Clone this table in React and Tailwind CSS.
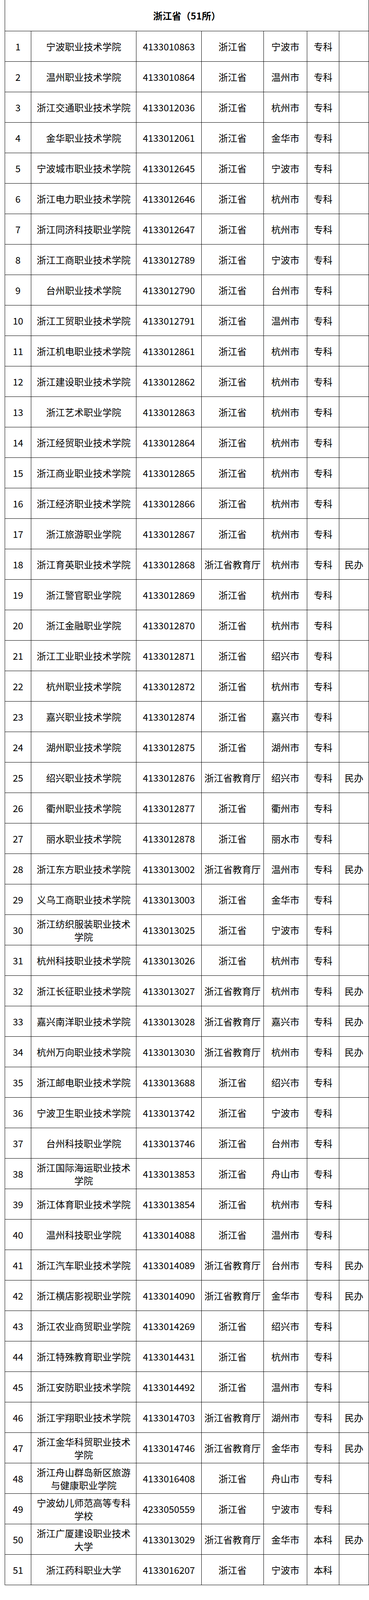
const ROWS = [
  ['1', '宁波职业技术学院', '4133010863', '浙江省', '宁波市', '专科', ''],
  ['2', '温州职业技术学院', '4133010864', '浙江省', '温州市', '专科', ''],
  ['3', '浙江交通职业技术学院', '4133012036', '浙江省', '杭州市', '专科', ''],
  ['4', '金华职业技术学院', '4133012061', '浙江省', '金华市', '专科', ''],
  ['5', '宁波城市职业技术学院', '4133012645', '浙江省', '宁波市', '专科', ''],
  ['6', '浙江电力职业技术学院', '4133012646', '浙江省', '杭州市', '专科', ''],
  ['7', '浙江同济科技职业学院', '4133012647', '浙江省', '杭州市', '专科', ''],
  ['8', '浙江工商职业技术学院', '4133012789', '浙江省', '宁波市', '专科', ''],
  ['9', '台州职业技术学院', '4133012790', '浙江省', '台州市', '专科', ''],
  ['10', '浙江工贸职业技术学院', '4133012791', '浙江省', '温州市', '专科', ''],
  ['11', '浙江机电职业技术学院', '4133012861', '浙江省', '杭州市', '专科', ''],
  ['12', '浙江建设职业技术学院', '4133012862', '浙江省', '杭州市', '专科', ''],
  ['13', '浙江艺术职业学院', '4133012863', '浙江省', '杭州市', '专科', ''],
  ['14', '浙江经贸职业技术学院', '4133012864', '浙江省', '杭州市', '专科', ''],
  ['15', '浙江商业职业技术学院', '4133012865', '浙江省', '杭州市', '专科', ''],
  ['16', '浙江经济职业技术学院', '4133012866', '浙江省', '杭州市', '专科', ''],
  ['17', '浙江旅游职业学院', '4133012867', '浙江省', '杭州市', '专科', ''],
  ['18', '浙江育英职业技术学院', '4133012868', '浙江省教育厅', '杭州市', '专科', '民办'],
  ['19', '浙江警官职业学院', '4133012869', '浙江省', '杭州市', '专科', ''],
  ['20', '浙江金融职业学院', '4133012870', '浙江省', '杭州市', '专科', ''],
  ['21', '浙江工业职业技术学院', '4133012871', '浙江省', '绍兴市', '专科', ''],
  ['22', '杭州职业技术学院', '4133012872', '浙江省', '杭州市', '专科', ''],
  ['23', '嘉兴职业技术学院', '4133012874', '浙江省', '嘉兴市', '专科', ''],
  ['24', '湖州职业技术学院', '4133012875', '浙江省', '湖州市', '专科', ''],
  ['25', '绍兴职业技术学院', '4133012876', '浙江省教育厅', '绍兴市', '专科', '民办'],
  ['26', '衢州职业技术学院', '4133012877', '浙江省', '衢州市', '专科', ''],
  ['27', '丽水职业技术学院', '4133012878', '浙江省', '丽水市', '专科', ''],
  ['28', '浙江东方职业技术学院', '4133013002', '浙江省教育厅', '温州市', '专科', '民办'],
  ['29', '义乌工商职业技术学院', '4133013003', '浙江省', '金华市', '专科', ''],
  ['30', '浙江纺织服装职业技术学院', '4133013025', '浙江省', '宁波市', '专科', ''],
  ['31', '杭州科技职业技术学院', '4133013026', '浙江省', '杭州市', '专科', ''],
  ['32', '浙江长征职业技术学院', '4133013027', '浙江省教育厅', '杭州市', '专科', '民办'],
  ['33', '嘉兴南洋职业技术学院', '4133013028', '浙江省教育厅', '嘉兴市', '专科', '民办'],
  ['34', '杭州万向职业技术学院', '4133013030', '浙江省教育厅', '杭州市', '专科', '民办'],
  ['35', '浙江邮电职业技术学院', '4133013688', '浙江省', '绍兴市', '专科', ''],
  ['36', '宁波卫生职业技术学院', '4133013742', '浙江省', '宁波市', '专科', ''],
  ['37', '台州科技职业学院', '4133013746', '浙江省', '台州市', '专科', ''],
  ['38', '浙江国际海运职业技术学院', '4133013853', '浙江省', '舟山市', '专科', ''],
  ['39', '浙江体育职业技术学院', '4133013854', '浙江省', '杭州市', '专科', ''],
  ['40', '温州科技职业学院', '4133014088', '浙江省', '温州市', '专科', ''],
  ['41', '浙江汽车职业技术学院', '4133014089', '浙江省教育厅', '台州市', '专科', '民办'],
  ['42', '浙江横店影视职业学院', '4133014090', '浙江省教育厅', '金华市', '专科', '民办'],
  ['43', '浙江农业商贸职业学院', '4133014269', '浙江省', '绍兴市', '专科', ''],
  ['44', '浙江特殊教育职业学院', '4133014431', '浙江省', '杭州市', '专科', ''],
  ['45', '浙江安防职业技术学院', '4133014492', '浙江省', '温州市', '专科', ''],
  ['46', '浙江宇翔职业技术学院', '4133014703', '浙江省教育厅', '湖州市', '专科', '民办'],
  ['47', '浙江金华科贸职业技术学院', '4133014746', '浙江省教育厅', '金华市', '专科', '民办'],
  ['48', '浙江舟山群岛新区旅游与健康职业学院', '4133016408', '浙江省', '舟山市', '专科', ''],
  ['49', '宁波幼儿师范高等专科学校', '4233050559', '浙江省', '宁波市', '专科', ''],
  ['50', '浙江广厦建设职业技术大学', '4133013029', '浙江省教育厅', '金华市', '本科', '民办'],
  ['51', '浙江药科职业大学', '4133016207', '浙江省', '宁波市', '本科', ''],
]

// column widths measured from the reference (first one carries the left border)
const WIDTHS = ['w-[68px] border-l', 'w-[269px]', 'w-[167px]', 'w-[159px]', 'w-[111px]', 'w-[82px]', 'w-[76px]']

const cell = 'shrink-0 h-full overflow-hidden flex items-center justify-center text-center border-r border-black px-[4px] break-all '

export default function App() {
  return (
    <div className="bg-white pl-[12px] text-black text-[24px] leading-[33px]" style={{ fontFamily: '"Noto Sans CJK SC", "Noto Sans", sans-serif' }}>
      <div className="w-[932px] flex flex-col">
        <div className="h-[80px] shrink-0 overflow-hidden flex items-center justify-center border-l border-r border-b border-black font-bold">
          浙江省（51所）
        </div>
        {ROWS.map(function(r) {
          return (
            <div key={r[0]} className="h-[78px] shrink-0 flex border-b border-black overflow-hidden">
              {r.map(function(v, i) {
                return <div key={i} className={cell + WIDTHS[i]}>{v}</div>
              })}
            </div>
          )
        })}
      </div>
    </div>
  )
}
